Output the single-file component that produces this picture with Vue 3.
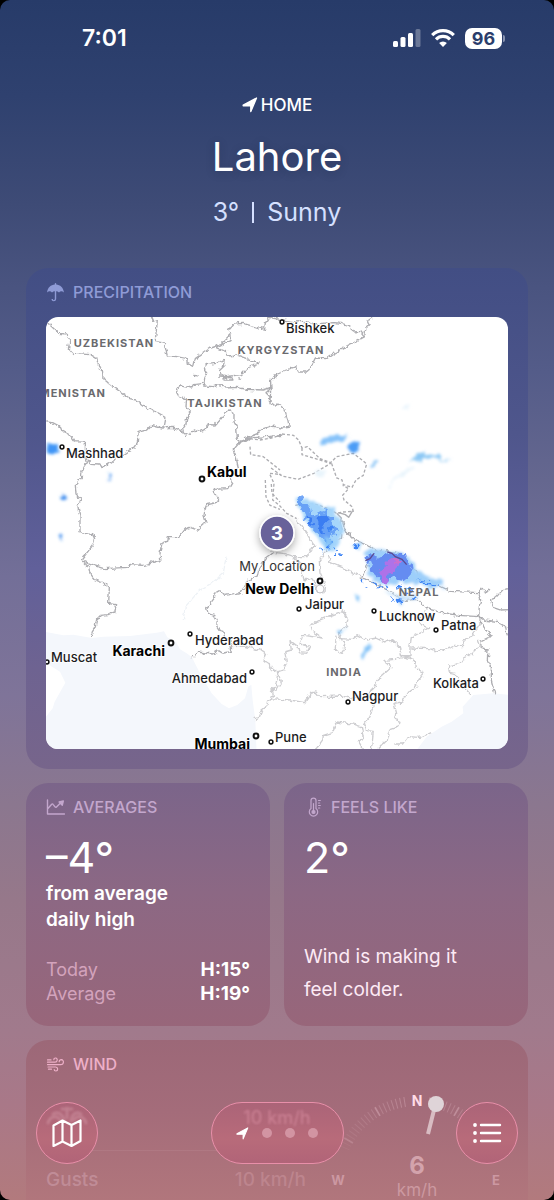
<script setup>
const cities = [
  { name: 'Bishkek', x: 286, y: 333, dx: 282, dy: 322 },
  { name: 'Mashhad', x: 66, y: 458, dx: 62, dy: 447 },
  { name: 'Kabul', x: 207, y: 477, dx: 202, dy: 479, big: true },
  { name: 'New Delhi', x: 314, y: 594, dx: 320, dy: 581, big: true, end: true },
  { name: 'Jaipur', x: 305, y: 609, dx: 299, dy: 609 },
  { name: 'Lucknow', x: 379, y: 621, dx: 374, dy: 611 },
  { name: 'Patna', x: 441, y: 630, dx: 436, dy: 630 },
  { name: 'Karachi', x: 165, y: 656, dx: 171, dy: 643, big: true, end: true },
  { name: 'Hyderabad', x: 195, y: 645, dx: 190, dy: 634 },
  { name: 'Muscat', x: 51, y: 662, dx: 47, dy: 662 },
  { name: 'Ahmedabad', x: 247, y: 683, dx: 252, dy: 672, end: true },
  { name: 'Kolkata', x: 479, y: 688, dx: 483, dy: 679, end: true },
  { name: 'Nagpur', x: 352, y: 701, dx: 348, dy: 702 },
  { name: 'Mumbai', x: 250, y: 749, dx: 256, dy: 736, big: true, end: true },
  { name: 'Pune', x: 275, y: 742, dx: 271, dy: 742 }
]

const countries = [
  { name: 'UZBEKISTAN', x: 114, y: 347 },
  { name: 'KYRGYZSTAN', x: 281, y: 354 },
  { name: 'MENISTAN', x: 106, y: 397, end: true },
  { name: 'TAJIKISTAN', x: 225, y: 407 },
  { name: 'NEPAL', x: 419, y: 596 },
  { name: 'INDIA', x: 344, y: 676 }
]

const ticks = []
for (let a = -66; a <= 66; a += 3) {
  if (Math.abs(a) > 8) {
    ticks.push({ a, major: a % 30 === 0, fade: Math.max(0.06, 0.32 - Math.abs(a) / 240) })
  }
}
</script>

<template>
  <div class="frame">
    <div class="screen">
      <div class="status">
        <time class="clock">7:01</time>
        <div class="indicators">
          <svg class="signal" viewBox="0 0 28 18" aria-label="Signal">
            <rect x="0" y="12" width="5" height="6" rx="1.500" />
            <rect x="7.500" y="8" width="5" height="10" rx="1.500" />
            <rect x="15" y="4" width="5" height="14" rx="1.500" />
            <rect x="22.500" y="0" width="5" height="18" rx="1.500" opacity=".3" />
          </svg>
          <svg class="wifi" viewBox="0 0 24 18" aria-label="Wi-Fi">
            <path d="M1.200 6.100a15.300 15.300 0 0 1 21.600 0M5 10.300a9.900 9.900 0 0 1 14 0" fill="none" stroke="#fff" stroke-width="3.200" />
            <path d="M12 18l-3.900-4a5.700 5.700 0 0 1 7.800 0z" fill="#fff" />
          </svg>
          <div class="battery"><span class="level">96</span><span class="cap"></span></div>
        </div>
      </div>

      <header class="hero">
        <p class="home">
          <svg class="arrow" viewBox="0 0 16 16"><path d="M1.200 8.200 14.500 1.100 8.800 14.600V8.800H1.200z" /></svg>
          <span>HOME</span>
        </p>
        <h1>Lahore</h1>
        <p class="now"><span>3°</span><span class="bar"></span><span>Sunny</span></p>
      </header>

      <main class="cards">
        <section class="card precipitation">
          <h2>
            <svg viewBox="0 0 18 20">
              <path d="M.6 10.400C1 5.600 4.500 2.800 8.300 2.500V1.600a.7.700 0 0 1 1.400 0v.9c3.800.3 7.300 3.100 7.700 7.900-1.600-1.500-3.600-1.400-4.900.1-1-1-1.800-1.300-2.800-1.300v7.600c0 3.400-4.700 3.200-4.700.3h1.400c0 1.500 1.900 1.500 1.900-.3V9.200c-1 0-1.800.3-2.800 1.300-1.300-1.500-3.300-1.600-4.900-.1z" fill="currentColor" />
            </svg>
            <span>PRECIPITATION</span>
          </h2>
          <svg class="map" viewBox="46 317 462 432" role="img" aria-label="Precipitation map">
            <defs>
              <filter id="soft" x="-30%" y="-30%" width="160%" height="160%">
                <feTurbulence type="fractalNoise" baseFrequency=".04" numOctaves="2" result="n" />
                <feDisplacementMap in="SourceGraphic" in2="n" scale="34" xChannelSelector="R" yChannelSelector="G" />
                <feGaussianBlur stdDeviation="5" />
              </filter>
              <filter id="edge" x="-20%" y="-20%" width="140%" height="140%">
                <feTurbulence type="fractalNoise" baseFrequency=".06" numOctaves="2" result="n" />
                <feDisplacementMap in="SourceGraphic" in2="n" scale="30" xChannelSelector="R" yChannelSelector="G" />
                <feGaussianBlur stdDeviation="2" />
              </filter>
              <filter id="rough" x="-5%" y="-5%" width="110%" height="110%">
                <feTurbulence type="fractalNoise" baseFrequency=".07" numOctaves="2" result="n" />
                <feDisplacementMap in="SourceGraphic" in2="n" scale="16" xChannelSelector="R" yChannelSelector="G" />
              </filter>
              <filter id="drop" x="-50%" y="-50%" width="200%" height="200%"><feDropShadow dx="0" dy="3" stdDeviation="4" flood-opacity=".35" /></filter>
            </defs>
            <rect x="46" y="317" width="462" height="432" fill="#fff" />

            <g transform="translate(30 520) scale(.3333)" class="sea">
              <path d="M48 336 100 346 130 344 186 354 220 350 300 348 380 338 402 334 412 352 438 366 450 388 470 400 486 412 500 440 520 478 545 520 575 552 597 565 622 555 645 535 655 500 664 494 668 540 676 600 680 700 40 700 40 600 68 565 74 545 106 488 90 455 66 440 48 428Z" />
            </g>
            <g transform="translate(270 520) scale(.3333)" class="sea">
              <path d="M720 525 670 520 610 525 578 560 580 580 545 605 515 620 470 650 440 690 720 690Z" />
            </g>

            <g filter="url(#rough)" transform="translate(30 300) scale(.3333)" class="border">
              <path d="M40 60 50 66 86 100 110 102 120 125 115 145 128 160 182 164 200 175 206 200 217 208 219 235 238 252 300 296 318 300 350 324 380 336 408 352 402 384 M40 365 68 368 88 378 94 392 120 405 132 422 166 424 166 465 172 488 156 510 154 535 136 555 138 582 154 596 142 615 150 650 150 698 188 704 194 716 188 736 154 780" />
              <path d="M172 480 182 490 210 492 216 503 246 488 262 470 284 462 310 444 322 428 324 398 334 394 350 390 364 376 394 384 430 382 456 392 466 406 496 390 510 394 525 388 535 374 555 375 580 345 598 330 612 340 612 365 620 380 622 416 628 422 660 414 758 406" />
              <path d="M362 42 372 66 382 62 376 122 402 126 412 168 440 170 470 176 472 190 490 200 496 176 540 144 570 134 605 100 596 88 610 72 640 70 680 82 704 88 706 66 716 52 760 60 796 66 830 64 850 72 910 68 934 70 960 78 970 96 992 94 1004 110 1008 84 1018 76 1012 64 1028 52" />
              <path d="M605 102 600 122 560 142 590 156 590 168 620 165 650 176 690 190 655 204 634 224 590 230 570 228 568 212 585 196 580 178 560 190 525 194 520 208 530 218 520 240 524 258 550 260 570 254 590 264 620 262 650 268 700 270 726 262 724 236 732 230 750 222 762 212 798 200 806 216 828 216 840 206 856 174 890 176 910 162 990 118 1004 110" />
              <path d="M520 250 490 254 484 264 450 258 438 274 446 288 470 298 468 320 484 336 470 354 468 374 458 386 460 404" />
              <path d="M726 262 708 278 720 290 718 304 736 318 744 312 762 326 774 362 778 382 760 384 724 378 700 386 680 402 628 422 M722 242 722 270 720 310" />
              <path d="M660 416 630 426 608 452 618 470 624 500 604 524 606 548 596 566 550 568 566 600 550 610 528 615 522 646 528 666 502 690 480 682 462 688 446 710 416 710 412 724 396 730 390 756 392 780" />
              <path d="M582 236 600 228 606 240 582 240zM628 236l6 2M490 226l20 2" />
            </g>
            <g transform="translate(30 300) scale(.3333)" class="border">
              <path class="dash" d="M660 416 690 420 724 414 758 404 M660 440 662 464 700 470 730 494 750 510 M706 540 708 590 720 616 750 628 M724 552 726 580 750 606" />
            </g>
            <g transform="translate(270 300) scale(.3333)" class="border">
              <path class="dash" d="M36 402 70 406 86 420 96 444 112 440 150 476 182 488 200 470 250 460 276 480 290 492 280 526 258 540 246 562 220 554 216 540 200 534 184 488 M96 444 96 464 130 474 182 490 132 520 84 538 36 528 0 502 M0 524 12 550 8 600 28 616 50 640 80 656" />
              <path class="dash" d="M76 616 108 610 140 614 170 624 200 640 220 636 250 634 246 620 222 600 218 586 236 566 218 556 M0 520 34 524" />
              <path d="M200 640 214 654 210 668 216 690 M206 638 226 644 236 652 248 632" />
            </g>
            <g filter="url(#rough)" transform="translate(30 520) scale(.3333)" class="border">
              <path d="M154 120 190 136 222 146 292 142 302 134 340 136 392 120" />
              <path d="M154 120 176 142 180 160 196 180 222 190 238 204 236 250 260 254 254 276 234 284 212 286 200 298 196 318 186 334 184 354" />
              <path d="M730 98 706 116 686 150 682 168 654 180 636 216 600 224 582 226 570 212 556 220 552 236 530 264 534 280 554 286 562 300 560 318 568 330 582 334 584 350 604 366 600 382 604 394 578 400 566 392 548 402 502 396 496 410 482 410" />
              <path class="state" d="M604 380 640 378 664 384 690 390 710 404 702 424 720 430 724 448 744 458 740 482 736 502 726 506 730 528 714 540 710 560 696 570 688 592 674 596" />
              <path class="faint" d="M460 300 466 260 510 210 540 194 580 160 588 110" />
            </g>
            <g filter="url(#rough)" transform="translate(270 520) scale(.3333)" class="border">
              <path d="M170 96 176 62 214 56 216 30 210 10 216 2 230 40 244 44 252 60 300 78 324 96 334 92 340 106 350 92 384 98 400 116 416 138 440 152 446 174 480 184 506 198 540 214 626 218 636 208 650 216 660 208 M296 118 286 150 274 172 340 202 380 228 400 242 440 238 470 266 510 276 566 286 626 290 628 260 632 240 626 218" />
              <path d="M740 202 700 208 680 230 662 236 668 262 690 270 740 268 M626 290 640 300 680 304 706 320 712 346 M626 290 648 330 664 348 632 364 634 384 654 390 652 420 664 440 664 480 674 520" />
              <path class="state" d="M80 0 96 20 116 50 132 76 112 110 70 110 40 100 0 96 M166 98 148 120 150 160 164 190 162 218 144 220 136 190 124 174 102 180 90 130 70 112 M176 102 180 128 204 138 220 144 280 172 M158 354 124 330 120 316 150 300 220 272 234 296 230 316 208 336 212 356 248 358 264 344 290 360 320 354 344 366 366 360 388 380 396 410 372 418 342 422 366 440 340 464 320 482 316 500 296 520 314 550 306 570 300 590 284 614 290 632 310 634 304 690" />
              <path class="state" d="M158 354 98 346 90 372 120 380 110 400 88 398 84 380 60 362 64 390 44 396 50 432 40 450 22 456 34 486 20 510 4 508 0 520 M0 440 18 454 M4 536 60 540 104 548 124 518 138 516 150 530 216 528 246 536 296 520 M198 350 196 388 214 400 226 382 212 350" />
              <path class="state" d="M396 410 420 410 420 380 424 352 476 324 458 318 440 294 462 286 466 270 M424 384 480 386 500 394 540 384 556 376 576 380 584 358 604 350 622 326 632 310 M396 410 432 418 436 442 462 460 440 486 440 500 414 518 396 546 372 550 380 580 376 598 390 604 388 620 360 630 352 660 322 690 M622 360 628 378 600 404 580 414 570 430 536 438 534 456 556 460 574 490 600 522 M136 690 158 660 160 646 186 638 200 606 248 612 274 620 280 650 268 668 280 690 M376 672 398 672 414 650 450 652 484 638" />
            </g>

            <g transform="translate(270 300) scale(.3333)">
              <g filter="url(#soft)">
                <path d="M150 430 158 412 180 410 210 402 240 404 236 416 200 424 160 436Z" fill="#86c2f9" />
                <path d="M228 436 252 424 276 436 264 456 238 460Z" fill="#4c9cf6" />
                <path d="M412 488 440 468 480 460 540 484 500 474 450 478Z" fill="#8cc8f4" />
                <path d="M302 496 316 484 326 492 308 506Z" fill="#8cc5f5" />
                <path d="M76 600 88 586 106 600 140 616 190 620 200 650 220 690 205 740 172 755 150 725 126 690 98 648Z" fill="#a6d6fb" />
                <path d="M130 520 160 506 170 512 150 528Z M390 326 420 316 410 330Z M350 560 400 510 440 496 400 530Z" fill="#e8f4fc" />
              </g>
              <g filter="url(#edge)">
                <path d="M80 600 94 594 104 608 118 618 122 638 144 648 152 630 174 632 184 660 196 678 208 694 186 700 176 726 150 712 122 684 104 648Z" fill="#5c98f6" opacity=".85" />
                <path d="M148 648 170 640 176 662 160 674 162 706 142 690Z M112 650 126 654 130 676 116 668Z" fill="#3b7df2" />
                <path d="M170 718 184 728 178 742 166 730Z M154 742 164 746 156 760Z M190 736 202 744 194 752Z" fill="#3683f3" />
              </g>
            </g>
            <g transform="translate(270 520) scale(.3333)">
              <g filter="url(#soft)">
                <path d="M282 96 320 88 380 92 420 110 432 144 470 170 520 186 520 202 460 200 410 186 360 198 320 176 290 166 296 130Z" fill="#9dcffa" />
                <path d="M160 50 182 56 178 84 166 86Z M250 76 274 68 270 84 254 88Z M254 222 272 232 262 250 Z M290 372 312 376 284 400 280 418 272 412 282 386Z M208 334 232 326 220 346Z" fill="#87c5f8" />
                <path d="M340 206 380 224 440 230 430 244 390 248Z" fill="#c4e1fa" />
              </g>
              <g filter="url(#edge)">
                <path d="M286 108 312 100 320 116 352 100 404 102 414 132 430 142 416 174 396 182 362 174 340 188 322 170 298 152 306 136 290 126Z" fill="#658cf1" />
                <path d="M360 116 388 118 398 128 380 142 372 160 350 164 354 190 340 190 332 156 342 136Z" fill="#ae72e8" />
                <path d="M364 112 390 118 396 132 376 126Z" fill="#cc70cd" />
                <path d="M250 74h22v8h-22zM184 20 194 26 176 34zM192 100h6v6h-6zM208 100h7v5h-7zM168 80h8v8h-8zM272 180h8v4h-8zM290 202h8v5h-8zM308 188h6v6h-6zM324 196h8v6h-8zM346 196 362 202 356 214zM380 196 396 204 384 210zM362 232 376 236 368 244zM384 238 400 240 394 248 380 246zM406 200 430 206 424 216zM426 230 444 234 430 240zM410 222 420 226 412 230zM440 180 470 186 500 190 500 196 470 192z" fill="#3d84f5" />
              </g>
              <path d="M286 122 300 116 312 100 M352 96 366 100 376 110 396 118 410 134" fill="none" stroke="#5b4a92" stroke-width="4" />
            </g>
            <g transform="translate(30 300) scale(.3333)" filter="url(#soft)">
              <path d="M50 432 70 434 88 450 68 458 50 446Z" fill="#3f95f6" />
              <path d="M94 584 110 590 108 604 94 598Z M230 522 242 524 240 536 232 534Z M82 710 98 706 96 724Z" fill="#3c8cee" />
            </g>
            <circle cx="320" cy="589" r="4" fill="none" stroke="#c5c5c9" />

            <text
              v-for="c in countries"
              :key="c.name"
              :x="c.x"
              :y="c.y"
              class="country"
              :class="{ end: c.end }"
            >{{ c.name }}</text>
            <g v-for="c in cities" :key="c.name" class="city" :class="{ big: c.big, end: c.end }">
              <circle :cx="c.dx" :cy="c.dy" :r="c.big ? 2.4 : 1.9" />
              <text :x="c.x" :y="c.y">{{ c.name }}</text>
            </g>
            <text x="277" y="571" class="place">My Location</text>
            <circle cx="277" cy="533" r="17" fill="#67629a" stroke="#fff" stroke-width="1.500" filter="url(#drop)" />
            <text x="277" y="540" class="pin">3</text>
          </svg>
        </section>

        <div class="pair">
          <section class="card tile">
            <h2>
              <svg viewBox="0 0 18 20" fill="none" stroke="currentColor" stroke-width="1.400" stroke-linecap="round" stroke-linejoin="round">
                <path d="M1 3v14h17M1 12l4.200-4.800c.5-.5 1-.5 1.400.1l1.900 2.500c.5.600 1 .6 1.500.1l4-3.900" />
                <path d="M12.600 4.900 16.800 4l-1 4.200z" fill="currentColor" />
              </svg>
              <span>AVERAGES</span>
            </h2>
            <p class="value">–4°</p>
            <p class="summary">from average<br />daily high</p>
            <dl>
              <div><dt>Today</dt><dd>H:15°</dd></div>
              <div><dt>Average</dt><dd>H:19°</dd></div>
            </dl>
          </section>
          <section class="card tile">
            <h2>
              <svg viewBox="0 0 18 20" fill="none" stroke="currentColor" stroke-width="1.200" stroke-linecap="round">
                <path d="M6.500 11.500V3.600a2.500 2.500 0 0 1 5 0v7.900a4.200 4.200 0 1 1-5 0z" />
                <path d="M9 6.500v7M14 3.500h1.800M14 6h1.200M14 8.500h1.800M14 11h1.200" />
                <circle cx="9" cy="15" r="1.500" fill="currentColor" />
              </svg>
              <span>FEELS LIKE</span>
            </h2>
            <p class="value">2°</p>
            <p class="note">Wind is making it<br />feel colder.</p>
          </section>
        </div>

        <section class="card wind">
          <h2>
            <svg viewBox="0 0 18 20" fill="none" stroke="currentColor" stroke-width="1.200" stroke-linecap="round">
              <path d="M1 8.200h7.500c2.600 0 3-3.900.7-4.200-1.200-.1-1.900.7-1.800 1.600M1 10.600h13.200c3.400 0 3.600-4.800.6-4.900-1.500 0-2.200 1-2.100 2M1.500 13h7.700c2.500.1 2.600 3.900.2 4-1.100 0-1.700-.7-1.700-1.500M1 5.900h3.500M2 15.200h3" />
            </svg>
            <span>WIND</span>
          </h2>
          <div class="wind-body">
            <dl class="gusts">
              <div><dt>Gusts</dt><dd>10 km/h</dd></div>
            </dl>
            <svg class="compass" viewBox="0 0 182 108" role="img" aria-label="Wind from the north, 6 km/h">
              <line
                v-for="t in ticks"
                :key="t.a"
                x1="91" x2="91" y1="4" y2="14"
                stroke="#f3cdd8"
                :stroke-width="t.major ? 1.6 : 1"
                :opacity="t.major ? t.fade + 0.15 : t.fade"
                :transform="`rotate(${t.a} 91 88)`"
              />
              <text x="91" y="14" class="north">N</text>
              <text x="12" y="93" class="dir">W</text>
              <text x="170" y="93" class="dir">E</text>
              <path d="M109 14 102 42" stroke="#d8bcc2" stroke-width="4" />
              <circle cx="110" cy="12" r="8" fill="#dfd4d8" />
              <text x="91" y="82" class="speed">6</text>
              <text x="91" y="104" class="unit">km/h</text>
            </svg>
          </div>
        </section>
      </main>

      <nav class="toolbar">
        <button class="round" type="button" aria-label="Map">
          <svg class="swirl" viewBox="0 0 44 22" fill="none" stroke="#dba5b2" stroke-width="3" stroke-linecap="round" aria-hidden="true">
            <path d="M3 18c2-7 9-8 12-3M8 9c5-3 10 0 11 7M22 3v10M36 9c-5-3-9 0-10 7M41 18c-2-7-9-8-12-3M17 4h10" />
          </svg>
          <svg class="glyph" viewBox="0 0 30 28" fill="none" stroke="#fff" stroke-width="2.200" stroke-linejoin="round">
            <path d="M1.500 6.500 10.500 1.500 19.500 6 28.500 1.500V22L19.500 27 10.500 22.500 1.500 27zM10.500 1.500v21M19.500 6v21" />
          </svg>
        </button>
        <button class="pages" type="button" aria-label="Locations">
          <span class="ghost" aria-hidden="true">10 km/h</span>
          <svg class="arrow small" viewBox="0 0 16 16"><path d="M1.200 8.200 14.500 1.100 8.800 14.600V8.800H1.200z" /></svg>
          <i></i><i></i><i></i>
        </button>
        <button class="round" type="button" aria-label="List">
          <svg class="glyph" viewBox="0 0 30 28" stroke="#fff" stroke-width="2.400" stroke-linecap="round">
            <path d="M9 6h19M9 14h19M9 22h19" />
            <path d="M3 6h.01M3 14h.01M3 22h.01" stroke-width="3.800" />
          </svg>
        </button>
      </nav>
    </div>
  </div>
</template>

<style>
body {
  background: #000;
}
</style>

<style scoped>
.frame {
  font-family: Inter, "Liberation Sans", sans-serif;
  color: #fff;
}
.screen {
  position: relative;
  display: flex;
  flex-direction: column;
  min-height: 100vh;
  overflow: hidden;
  border-radius: 10px;
  background: linear-gradient(#273b69 0%, #2f416f 8%, #3e4b76 17%, #4a5480 24%, #545c89 31%, #65678f 40%, #736f98 48%, #7f7499 58%, #8b778f 67%, #96788a 75%, #a17a8c 86%, #a97888 92%, #b27a7d 100%);
}
p, h1, h2, dl, dd {
  margin: 0;
}
.status {
  display: flex;
  align-items: center;
  justify-content: space-between;
  height: 76px;
  padding: 0 49px 0 82px;
}
.clock {
  font-size: 23px;
  font-weight: 600;
}
.indicators {
  display: flex;
  align-items: center;
  gap: 10px;
}
.signal {
  width: 28px;
  height: 18px;
  fill: #fff;
}
.wifi {
  width: 24px;
  height: 18px;
}
.battery {
  display: flex;
  align-items: center;
  gap: 1px;
}
.level {
  width: 37px;
  border-radius: 7px;
  background: #fff;
  color: #2b3e6c;
  font-size: 18px;
  font-weight: 700;
  line-height: 21px;
  text-align: center;
}
.cap {
  width: 2px;
  height: 7px;
  border-radius: 0 2px 2px 0;
  background: #8893b0;
}
.hero {
  display: flex;
  flex-direction: column;
  align-items: center;
  padding: 17px 0 40px;
}
.home {
  display: flex;
  align-items: center;
  gap: 3px;
  font-size: 17px;
  font-weight: 500;
  line-height: 24px;
}
.arrow {
  width: 16px;
  height: 16px;
  fill: #fff;
  stroke: #fff;
  stroke-width: 1.4px;
  stroke-linejoin: round;
}
h1 {
  margin-top: 16px;
  font-size: 40px;
  font-weight: 400;
  line-height: 48px;
  text-shadow: 0 2px 8px rgba(20, 30, 60, 0.25);
}
.now {
  display: flex;
  align-items: center;
  gap: 13px;
  margin-top: 15px;
  color: #d5e0ff;
  font-size: 25px;
  line-height: 32px;
}
.bar {
  width: 2px;
  height: 21px;
  background: #d5e0ff;
}
.cards {
  display: flex;
  flex: 1;
  flex-direction: column;
  gap: 14px;
  padding: 0 26px;
}
.card {
  padding: 12px 20px 20px;
  border-radius: 22px;
}
.card h2 {
  display: flex;
  align-items: center;
  gap: 8px;
  color: #c3a7cd;
  font-size: 16px;
  font-weight: 500;
  line-height: 24px;
}
.card h2 svg {
  width: 19px;
  height: 20px;
}
.precipitation {
  background: linear-gradient(#424e84, #4f568c 33%, #61609a 60%, #6e6391 80%, #77658b);
}
.precipitation h2 {
  color: #8f9bd6;
}
.map {
  display: block;
  width: 100%;
  margin-top: 13px;
  border-radius: 12px;
}
.sea {
  fill: #f4f7fc;
}
.border {
  fill: none;
  stroke: #adadb1;
  stroke-width: 4;
  stroke-linejoin: round;
}
.border .state {
  stroke: #cdcdd0;
}
.border .faint {
  stroke: #eef2f6;
}
.border .dash {
  stroke-dasharray: 9 6;
}
.country {
  fill: #6a6a6e;
  font-size: 11px;
  font-weight: 700;
  letter-spacing: 1px;
  text-anchor: middle;
}
.city text {
  fill: #1c1c1e;
  font-size: 13px;
  font-weight: 500;
  paint-order: stroke;
  stroke: #fff;
  stroke-width: 1.5px;
}
.city circle {
  fill: #fff;
  stroke: #111;
  stroke-width: 1.5px;
}
.city.big text {
  fill: #000;
  font-size: 14px;
  font-weight: 700;
}
.city.big circle {
  stroke-width: 2px;
}
.end,
.city.end text {
  text-anchor: end;
}
.place {
  fill: #333;
  font-size: 13px;
  text-anchor: middle;
}
.pin {
  fill: #fff;
  font-size: 19px;
  font-weight: 700;
  text-anchor: middle;
}
.pair {
  display: grid;
  grid-template-columns: 1fr 1fr;
  gap: 14px;
}
.tile {
  display: flex;
  flex-direction: column;
  min-height: 211px;
  background: linear-gradient(#7b658a, #8c6884 45%, #98667a);
}
.value {
  margin-top: 14px;
  font-size: 43px;
  font-weight: 400;
  line-height: 48px;
}
.summary {
  font-size: 19px;
  font-weight: 600;
  line-height: 26px;
}
.tile dl {
  margin-top: auto;
  font-size: 18px;
  line-height: 24px;
}
dl div {
  display: flex;
  justify-content: space-between;
}
dt {
  color: #d3a3bc;
}
dd {
  font-weight: 700;
}
.tile dd {
  font-size: 19px;
}
.note {
  margin-top: auto;
  color: #fdeaf5;
  font-size: 19px;
  line-height: 33px;
}
.wind {
  flex: 1;
  padding-bottom: 0;
  border-radius: 22px 22px 0 0;
  background: linear-gradient(#9c6878, #a46c7a 45%, #b1767c);
}
.wind h2 {
  color: #eeb0c8;
}
.wind-body {
  display: flex;
  align-items: flex-end;
  justify-content: space-between;
  height: 124px;
}
.gusts {
  flex: 1;
  padding: 17px 0 8px;
  border-top: 1px solid rgba(255, 220, 230, 0.08);
  font-size: 19px;
  line-height: 24px;
}
.gusts dt,
.gusts dd {
  color: #c08c97;
  font-weight: 500;
}
.gusts dd {
  padding-right: 20px;
  color: #bd858e;
}
.compass {
  width: 182px;
  height: 108px;
}
.compass text {
  text-anchor: middle;
}
.north {
  fill: #ffdbe6;
  font-size: 14px;
  font-weight: 700;
}
.dir {
  fill: #cc98a2;
  font-size: 13px;
  font-weight: 700;
}
.speed {
  fill: #d3a3ac;
  font-size: 24px;
  font-weight: 700;
}
.unit {
  fill: #cc99a1;
  font-size: 17px;
}
.toolbar {
  position: absolute;
  right: 36px;
  bottom: 36px;
  left: 36px;
  display: flex;
  align-items: center;
  justify-content: space-between;
}
.toolbar button {
  position: relative;
  display: flex;
  align-items: center;
  justify-content: center;
  height: 62px;
  padding: 0;
  border: 1px solid #e88fa9;
  border-radius: 31px;
  background: linear-gradient(#ab6478, #b86b7a 60%, #b16478);
  color: #fff;
  font: inherit;
  overflow: hidden;
}
.toolbar .round {
  width: 62px;
}
.glyph {
  position: relative;
  width: 30px;
  height: 28px;
}
.toolbar .pages {
  gap: 13px;
  width: 133px;
}
.pages i {
  width: 10px;
  height: 10px;
  border-radius: 5px;
  background: #d294a2;
}
.arrow.small {
  width: 13px;
  height: 13px;
}
.ghost {
  position: absolute;
  top: 4px;
  right: 0;
  left: 0;
  color: #d98fa2;
  font-size: 18px;
  font-weight: 500;
  line-height: 22px;
  filter: blur(1px);
  opacity: 0.6;
}
.swirl {
  position: absolute;
  top: 2px;
  left: 8px;
  width: 44px;
  height: 22px;
  filter: blur(1px);
  opacity: 0.4;
}
</style>
